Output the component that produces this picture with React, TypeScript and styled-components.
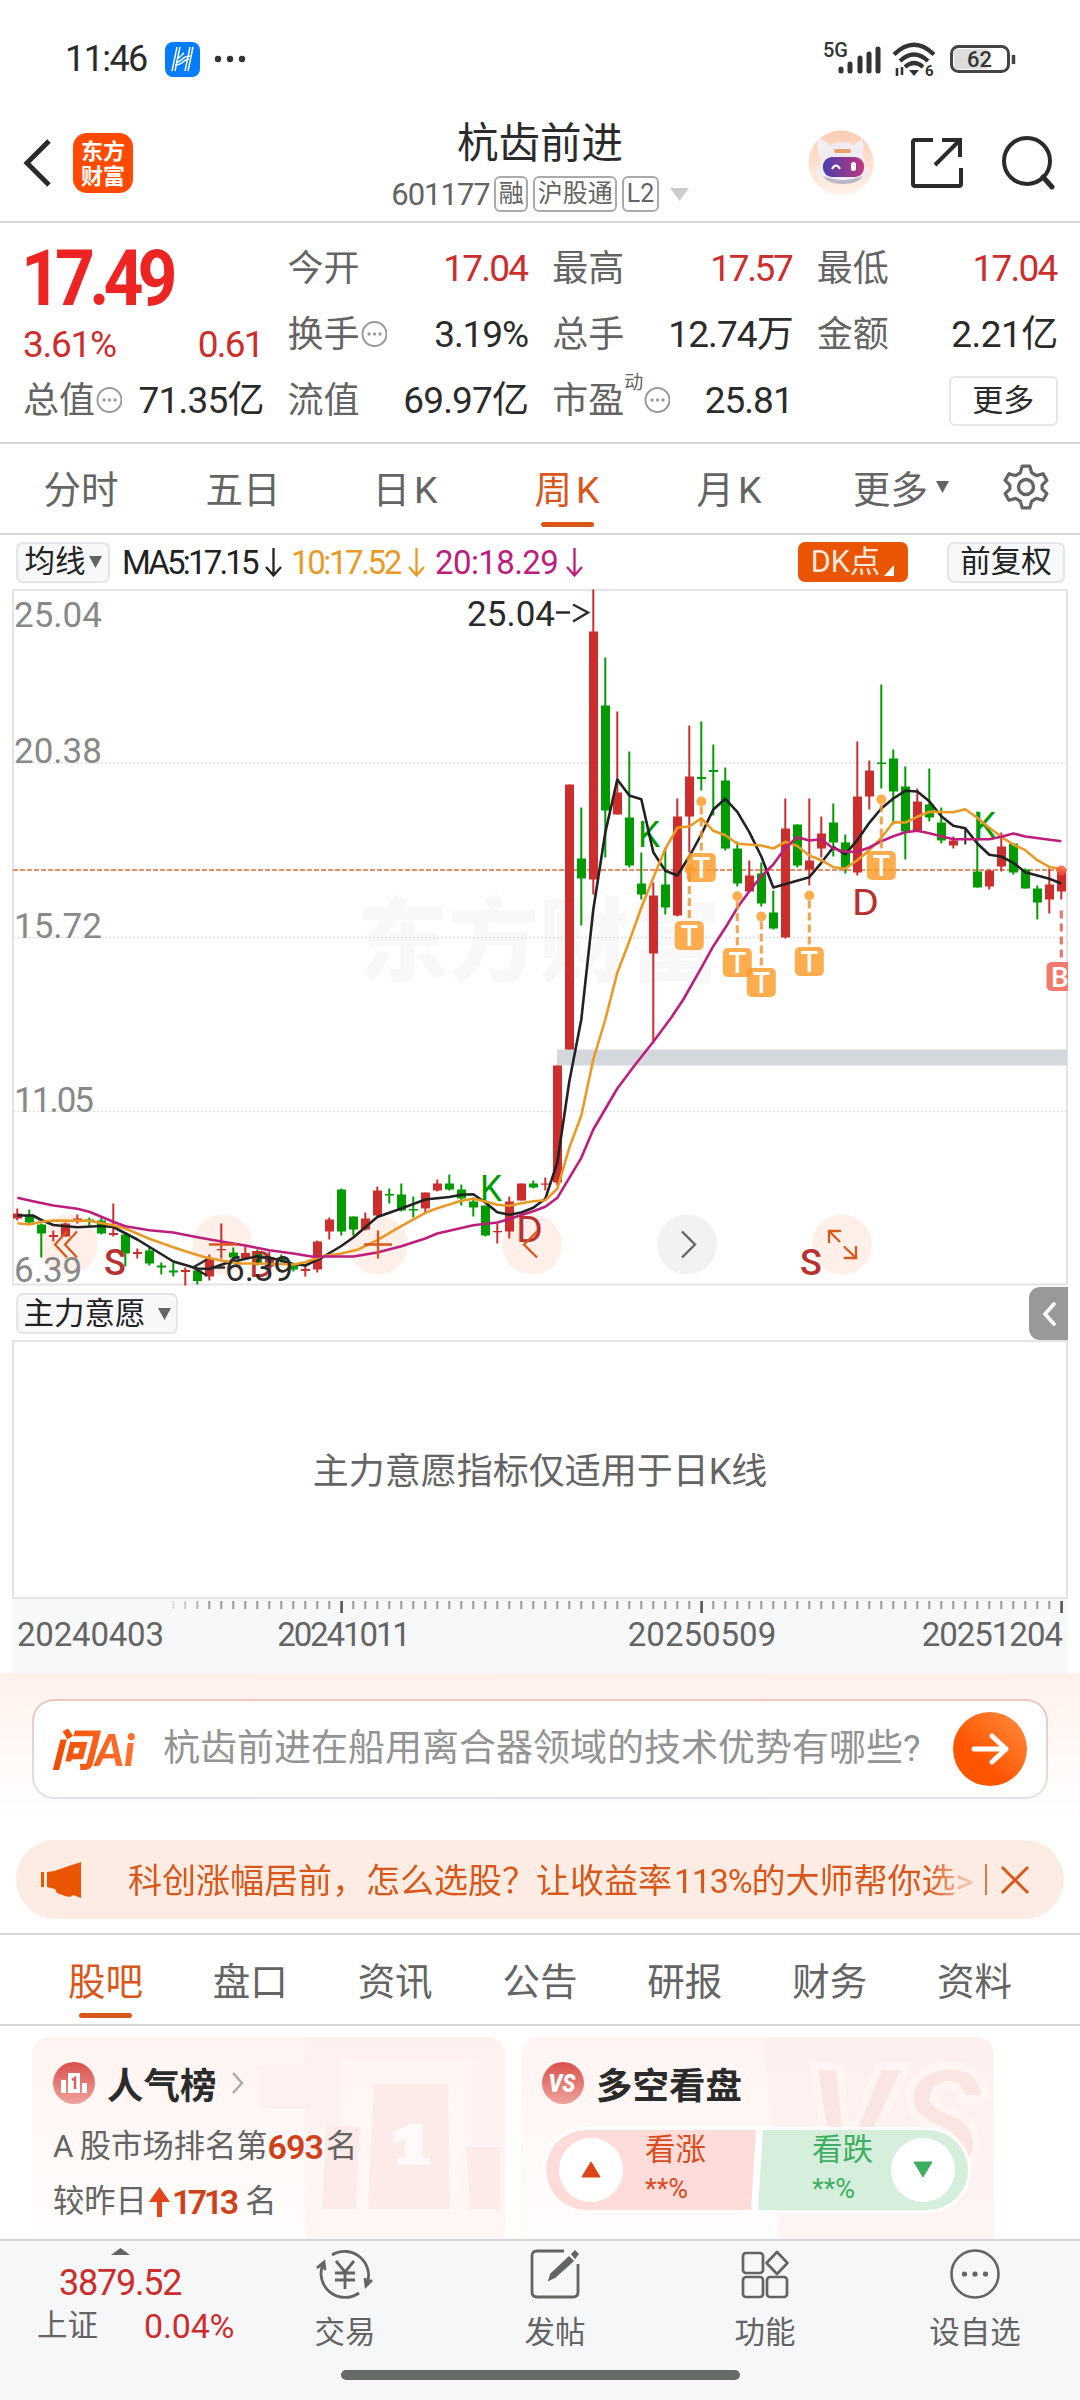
import React from "react";
import styled, { createGlobalStyle } from "styled-components";

const Global = createGlobalStyle`
  * { box-sizing: border-box; }
  body { margin: 0; background: #fff; }
`;

const RED = "#cc2e2e";
const GREEN = "#029c02";
const ORANGE = "#d9571a";
const GREY = "#646464";
const INK = "#2b2b2b";
const LINE = "#d6d6d6";
const SANS = `Roboto, "Noto Sans CJK SC", sans-serif`;

const Page = styled.div`
  width: 1080px;
  height: 2400px;
  overflow: hidden;
  display: flex;
  flex-direction: column;
  background: #fff;
  color: ${INK};
  font-family: ${SANS};
  white-space: nowrap;
`;

const Txt = styled.span<{ $s?: number; $c?: string; $ls?: number; $w?: number }>`
  font-size: ${(p) => p.$s ?? 37}px;
  color: ${(p) => p.$c ?? "inherit"};
  letter-spacing: ${(p) => p.$ls ?? 0}px;
  margin-right: ${(p) => -(p.$ls ?? 0) - 1.5}px;
  font-weight: ${(p) => p.$w ?? 400};
  line-height: 1.2;
`;

/* ---------- status bar ---------- */
const StatusBar = styled.div`
  height: 105px;
  padding: 14px 64px 0 65px;
  display: flex;
  align-items: center;
  justify-content: space-between;
`;
const StatusSide = styled.div`
  display: flex;
  align-items: center;
`;
const AppBadge = styled.div`
  width: 35px;
  height: 35px;
  margin: 0 14px 0 18px;
  border-radius: 8px;
  background: #057dfb;
  display: grid;
  place-items: center;
`;

/* ---------- header ---------- */
const Header = styled.header`
  height: 118px;
  border-bottom: 2px solid ${LINE};
  display: grid;
  grid-template-columns: 1fr auto 1fr;
  align-items: center;
`;
const HeaderLeft = styled.div`
  display: flex;
  align-items: center;
  gap: 21px;
  padding-left: 23px;
`;
const HeaderRight = styled.div`
  display: flex;
  align-items: center;
  justify-content: flex-end;
  padding-right: 25px;
`;
const Logo = styled.div`
  width: 60px;
  height: 60px;
  border-radius: 14px;
  background: #ff4a00;
  color: #fff;
  font: 700 22px/25px "Noto Sans CJK SC", sans-serif;
  text-align: center;
  padding-top: 4px;
  white-space: normal;
`;
const TitleBox = styled.div`
  display: flex;
  flex-direction: column;
  align-items: center;
`;
const Title = styled.div`
  font-size: 41.5px;
  line-height: 50px;
  margin-top: 13px;
`;
const CodeRow = styled.div`
  display: flex;
  align-items: center;
  gap: 5px;
  height: 50px;
  color: ${GREY};
`;
const Tag = styled.span`
  height: 36px;
  padding: 0 2.5px;
  border: 2px solid #aaa;
  border-radius: 6px;
  font-size: 25px;
  line-height: 32px;
`;

/* ---------- quote ---------- */
const Quote = styled.section`
  height: 221px;
  padding: 13px 23px 0;
  border-bottom: 2px solid ${LINE};
  display: grid;
  grid-template-columns: repeat(4, 240px);
  grid-template-rows: 198px;
  column-gap: 24.6px;
`;
const QuoteCol = styled.div`
  display: flex;
  flex-direction: column;
`;
const Cell = styled.div<{ $h?: number }>`
  height: ${(p) => p.$h ?? 66}px;
  display: flex;
  align-items: center;
  justify-content: space-between;
`;
const Label = styled.span`
  display: flex;
  align-items: center;
  font-size: 36px;
  line-height: 44px;
  color: ${GREY};
`;
const Sup = styled.sup`
  align-self: flex-start;
  margin-top: -9px;
  font-size: 19px;
  line-height: 26px;
`;
const Price = styled.div`
  height: 87px;
  margin-left: -2px;
  display: flex;
  align-items: center;
  color: #ec2424;
  font-size: 77px;
  font-weight: 700;
  letter-spacing: -6.5px;
  transform: scaleX(0.905);
  transform-origin: 0 50%;
`;
const MoreButton = styled.button`
  width: 109px;
  height: 50px;
  margin-left: auto;
  margin-right: -1px;
  padding: 0;
  border: 2px solid #e6e6e6;
  border-radius: 6px;
  background: #fff;
  color: ${INK};
  font: 31px/44px ${SANS};
`;

/* ---------- tabs ---------- */
const PeriodTabs = styled.nav`
  height: 91px;
  border-bottom: 2px solid ${LINE};
  display: grid;
  grid-template-columns: repeat(6, 162px) 1fr;
`;
const Tab = styled.div<{ $on?: boolean; $pad?: number }>`
  display: flex;
  align-items: center;
  justify-content: center;
  position: relative;
  gap: 8px;
  padding: 0 0 3px ${(p) => p.$pad ?? 0}px;
  font-size: 37.5px;
  color: ${(p) => (p.$on ? ORANGE : GREY)};
  &::after {
    content: "";
    display: ${(p) => (p.$on ? "block" : "none")};
    position: absolute;
    bottom: 6px;
    left: calc(50% - 26.5px);
    width: 53px;
    height: 5px;
    border-radius: 3px;
    background: ${ORANGE};
  }
`;

/* ---------- indicator toolbar ---------- */
const MaBar = styled.div`
  height: 55px;
  padding: 1px 15px 0 16px;
  display: flex;
  align-items: center;
`;
const Chip = styled.button<{ $w: number; $hot?: boolean }>`
  width: ${(p) => p.$w}px;
  height: ${(p) => (p.$hot ? 40 : 41)}px;
  flex: none;
  padding: 0;
  display: flex;
  align-items: center;
  justify-content: center;
  gap: 3px;
  border: ${(p) => (p.$hot ? "0" : "2px solid #e3e5e8")};
  border-radius: 7px;
  background: ${(p) => (p.$hot ? "#ea5504" : "#f7f8fa")};
  color: ${(p) => (p.$hot ? "#ffe9dc" : "#222")};
  font: 30.5px/36px ${SANS};
`;
const MaItem = styled.span<{ $c: string; $w: number; $ls: number }>`
  width: ${(p) => p.$w}px;
  display: flex;
  align-items: center;
  gap: 8px;
  color: ${(p) => p.$c};
  font-size: 33px;
  letter-spacing: ${(p) => p.$ls}px;
`;
const Spacer = styled.div<{ $w?: number }>`
  flex: ${(p) => (p.$w ? `0 0 ${p.$w}px` : "1")};
`;

/* ---------- charts ---------- */
const ChartSvg = styled.svg`
  display: block;
  flex: none;
  font-family: ${SANS};
`;
const SubBar = styled.div`
  height: 54px;
  padding: 1px 12px 0 16px;
  display: flex;
  align-items: center;
  justify-content: space-between;
`;
const Collapse = styled.div`
  width: 39px;
  height: 53px;
  border-radius: 11px 0 0 11px;
  background: #999;
  display: grid;
  place-items: center;
`;
const SubPanel = styled.div`
  height: 259px;
  margin: 0 12px;
  padding-bottom: 4px;
  border: 2px solid #e4e4e4;
  display: flex;
  align-items: center;
  justify-content: center;
  font-size: 36px;
  color: ${GREY};
`;
const Axis = styled.div`
  height: 74px;
  margin: 0 12px;
  padding-top: 1px;
  background: #f7f8fa;
`;
const Dates = styled.div`
  display: grid;
  grid-template-columns: 238px 176px 180px 182px 1fr;
  padding: 0 6px 0 5px;
  font-size: 33px;
  line-height: 42px;
  color: ${GREY};
`;
const DateLabel = styled.span<{ $align: string; $ls: number; $col: number }>`
  grid-column: ${(p) => p.$col};
  text-align: ${(p) => p.$align};
  letter-spacing: ${(p) => p.$ls}px;
`;

/* ---------- AI box ---------- */
const AiSection = styled.section`
  height: 150px;
  padding: 26px 32px 0;
  background: linear-gradient(#fff1ec, #fff);
`;
const AiBox = styled.div`
  height: 100px;
  padding: 0 19px 0 17px;
  border: 2px solid transparent;
  border-radius: 22px;
  background: linear-gradient(#fff, #fff) padding-box, linear-gradient(#edc6bd, #dfe3ea) border-box;
  display: flex;
  align-items: center;
`;
const AiLogo = styled.span`
  width: 96px;
  margin-right: 16px;
  font: italic 900 44px/52px Lato, "Noto Sans CJK SC", sans-serif;
  letter-spacing: 0;
  background: linear-gradient(90deg, #f04a00, #ff7a3c);
  background-clip: text;
  -webkit-background-clip: text;
  color: transparent;
`;
const AiGo = styled.div`
  width: 74px;
  height: 74px;
  margin-left: auto;
  border-radius: 50%;
  background: linear-gradient(45deg, #ff5400 35%, #ff8f42);
  display: grid;
  place-items: center;
`;

/* ---------- banner ---------- */
const Banner = styled.div`
  height: 79px;
  flex: none;
  margin: 17px 16px 14px;
  padding: 0 34px 0 24px;
  border-radius: 40px;
  background: #fcece3;
  color: ${ORANGE};
  display: flex;
  align-items: center;
`;
const BannerText = styled.div`
  width: 846px;
  margin-left: 46px;
  padding-bottom: 2px;
  font-size: 34px;
  mask-image: linear-gradient(90deg, #000 800px, rgba(0, 0, 0, 0.3) 835px);
`;
const Hundred = styled.span`
  margin-left: 2px;
  letter-spacing: -1.2px;
`;
const Divider = styled.i`
  width: 2px;
  height: 31px;
  margin: 0 13px 0 auto;
  background: #dd7a4a;
`;

const InfoTabs = styled.nav`
  height: 93px;
  flex: none;
  padding: 0 33px;
  border-top: 2px solid ${LINE};
  border-bottom: 2px solid ${LINE};
  display: grid;
  grid-template-columns: repeat(7, 1fr);
`;

/* ---------- cards ---------- */
const Cards = styled.section`
  height: 213px;
  flex: none;
  padding: 11px 32px 0;
  display: flex;
  gap: 16px;
`;
const Card = styled.div`
  width: 473px;
  border-radius: 18px 18px 0 0;
  background: linear-gradient(#fff4f1, #fffdfc);
  position: relative;
  overflow: hidden;
`;
const CardArt = styled.svg`
  position: absolute;
  right: 0;
  top: 0;
`;
const CardBody = styled.div`
  position: relative;
  padding: 0 21px;
`;
const CardHead = styled.div`
  height: 92px;
  display: flex;
  align-items: center;
  gap: 12px;
  font-size: 36.5px;
  font-weight: 700;
`;
const CardLine = styled.div`
  height: 55px;
  display: flex;
  align-items: center;
  font-size: 31.3px;
  line-height: 40px;
  position: relative;
  top: -10px;
  color: ${GREY};
`;
const Hot = styled.b<{ $ls?: number }>`
  color: #d04018;
  font-size: 34px;
  font-weight: 600;
  letter-spacing: ${(p) => p.$ls ?? -1}px;
`;
const Duel = styled.div`
  width: 428px;
  height: 86px;
  margin: -2px 0 0 1px;
  padding: 3px;
  border-radius: 43px;
  background: #fff;
  display: flex;
  gap: 2px;
`;
const Side = styled.div<{ $bull?: boolean }>`
  flex: 1;
  display: flex;
  align-items: center;
  justify-content: ${(p) => (p.$bull ? "flex-start" : "flex-end")};
  gap: ${(p) => (p.$bull ? 22 : 18)}px;
  padding: 0 13px;
  color: ${(p) => (p.$bull ? "#d84b1f" : "#3fae62")};
  background: ${(p) => (p.$bull ? "#fddcd9" : "#d5efdc")};
  border-radius: ${(p) => (p.$bull ? "40px 0 0 40px" : "0 40px 40px 0")};
  clip-path: ${(p) =>
    p.$bull ? "polygon(0 0, 100% 0, calc(100% - 5px) 100%, 0 100%)" : "polygon(5px 0, 100% 0, 100% 100%, 0 100%)"};
`;
const SideText = styled.div`
  display: flex;
  flex-direction: column;
  gap: 5px;
  font-size: 30.5px;
  line-height: 36px;
  padding-bottom: 2px;
`;
const Disc = styled.div`
  width: 64px;
  height: 64px;
  border-radius: 50%;
  background: #fff;
  display: grid;
  place-items: center;
`;

/* ---------- bottom bar ---------- */
const Bottom = styled.footer`
  height: 161px;
  flex: none;
  border-top: 2px solid #d3d5d6;
  background: #f6f7f9;
`;
const BottomRow = styled.div`
  height: 129px;
  display: grid;
  grid-template-columns: 240px repeat(4, 210px);
`;
const IndexCell = styled.div`
  display: flex;
  flex-direction: column;
  align-items: center;
  gap: 7px;
  color: ${RED};
  padding-top: 7px;
`;
const IndexRow = styled.div`
  width: 100%;
  padding: 0 7px 0 37px;
  margin-top: -7px;
  display: flex;
  align-items: center;
  justify-content: space-between;
  height: 42px;
`;
const Action = styled.div`
  display: flex;
  flex-direction: column;
  align-items: center;
  color: ${GREY};
  font-size: 30.5px;
  line-height: 40px;
  padding-top: 5px;
  gap: 11px;
`;
const HomeBar = styled.div`
  width: 399px;
  height: 10px;
  margin: 0 auto;
  border-radius: 5px;
  background: #666a68;
`;

/* ---------- small drawings ---------- */
const Dots = () => (
  <svg width="27" height="27" viewBox="0 0 27 27" fill="none" stroke="#9a9a9a" strokeWidth="2">
    <circle cx="14.5" cy="13" r="12" />
    <g fill="#9a9a9a" stroke="none">
      <circle cx="9" cy="13" r="1.7" />
      <circle cx="14.5" cy="13" r="1.7" />
      <circle cx="20" cy="13" r="1.7" />
    </g>
  </svg>
);
const Caret = ({ w = 12, h = 11, c = GREY, up = false }) => (
  <svg width={w} height={h} viewBox="0 0 10 10" preserveAspectRatio="none">
    <path d={up ? "M0 10H10L5 0Z" : "M0 0H10L5 10Z"} fill={c} />
  </svg>
);
const DownArrow = () => (
  <svg width="17" height="29" viewBox="0 0 17 29" fill="none" stroke="currentColor" strokeWidth="2.3">
    <path d="M8.5 0V27M1 19L8.5 27.5L16 19" />
  </svg>
);
const ShareIcon = styled.svg`
  margin: 0 38px 0 37px;
`;
const MoreArrow = styled.svg`
  margin-left: 2px;
`;
const RiseArrow = styled.svg`
  margin: 0 2px 0 2px;
`;

/* ---------- candle data: colour, high, body top, body bottom, low ---------- */
type Candle = [string, number, number, number, number];
const candles: Candle[] = [
  ["r", 1209, 1214, 1219, 1221], ["g", 1210, 1216, 1223, 1224], ["g", 1224, 1225, 1234, 1258], ["r", 1231, 1235.5, 1237.5, 1242],
  ["r", 1223, 1224, 1237, 1237], ["r", 1215, 1219, 1221, 1224], ["g", 1218, 1220, 1222, 1227], ["g", 1218, 1221, 1234, 1235],
  ["r", 1204, 1233.5, 1235.5, 1237], ["g", 1233, 1235, 1254, 1267], ["r", 1249, 1252.5, 1254.5, 1259], ["g", 1248, 1251, 1264, 1266],
  ["g", 1263, 1266, 1268, 1275], ["g", 1263, 1271, 1273, 1277], ["r", 1268, 1270.5, 1272.5, 1286], ["g", 1270, 1271, 1281.5, 1285],
  ["r", 1255, 1259, 1277, 1281], ["r", 1224, 1249.5, 1250.8, 1259], ["g", 1248, 1253, 1258, 1261], ["r", 1247, 1253.5, 1259, 1259],
  ["g", 1250, 1252, 1265, 1266], ["r", 1252, 1258, 1267, 1267], ["g", 1255, 1258, 1261, 1263], ["g", 1264, 1266, 1270, 1272],
  ["r", 1266, 1269.5, 1271.5, 1277], ["r", 1241, 1242, 1270, 1273], ["r", 1218, 1220, 1232, 1240], ["g", 1189, 1190, 1232, 1236],
  ["g", 1217, 1217, 1230, 1236], ["r", 1213, 1219, 1230, 1231], ["r", 1187, 1191, 1216, 1217], ["g", 1189, 1194.5, 1196, 1204],
  ["g", 1184, 1195, 1211, 1212], ["g", 1197, 1209.5, 1211, 1218], ["r", 1193, 1193, 1209, 1213], ["r", 1180, 1184, 1191, 1192],
  ["g", 1175, 1184, 1190, 1191], ["g", 1185, 1190, 1199, 1206], ["g", 1198, 1202, 1208, 1217], ["g", 1206, 1206, 1236, 1237],
  ["r", 1224, 1231.5, 1232.8, 1244], ["r", 1197, 1202, 1232, 1239], ["r", 1184, 1184, 1201, 1201], ["g", 1181, 1184, 1188, 1189],
  ["r", 1178, 1184, 1185.2, 1191], ["r", 1066, 1066, 1183, 1186], ["r", 785, 785, 1050, 1050], ["g", 808, 859, 879, 926],
  ["r", 590, 632, 880, 895], ["g", 658, 706, 811, 858], ["r", 712, 793, 815, 815], ["g", 752, 818, 866, 868],
  ["g", 853, 884, 895, 900], ["r", 883, 896, 954, 1044], ["g", 848, 885, 908, 915], ["r", 799, 817, 916, 917],
  ["r", 726, 777, 817, 853], ["g", 722, 777.5, 779.5, 791], ["g", 745, 770.5, 772.5, 816], ["g", 768, 781, 849, 851],
  ["g", 842, 849, 884, 887], ["r", 861, 876, 892, 892], ["g", 863, 874, 904, 907], ["g", 891, 913, 929, 930],
  ["r", 799, 829, 938, 939], ["g", 825, 825, 866, 868], ["r", 799, 861, 870, 886], ["r", 817, 834, 849, 858],
  ["g", 804, 823, 843, 857], ["g", 835, 843, 868, 874], ["r", 742, 797, 873, 876], ["r", 761, 771, 797, 810],
  ["g", 685, 763, 764.5, 789], ["g", 750, 759, 792, 825], ["g", 767, 787, 832, 860], ["r", 789, 802, 831, 832],
  ["g", 769, 805, 818, 822], ["g", 808, 823, 841, 844], ["r", 837, 841, 846, 849], ["k", 828, 838.5, 840.5, 845],
  ["g", 812, 872, 888, 888], ["r", 870, 871, 887, 890], ["r", 833, 847, 867, 872], ["g", 844, 844, 873, 875],
  ["g", 869, 870, 889, 889], ["g", 886, 889, 903, 920], ["r", 869, 885, 900, 914], ["r", 870, 872, 892, 900],
];
const cx = (i: number) => 17.3 + i * 12;
const tone: Record<string, string> = { r: RED, g: GREEN, k: INK };

/* moving averages as candle index, y */
const ma5 = [
  0, 1216, 1.3, 1216, 2, 1220.5, 3, 1225.5, 5, 1227.7, 7, 1226.5, 8, 1227.5, 10, 1240, 13, 1262, 15, 1269, 16, 1269.5, 17.3, 1264, 20, 1256.7,
  21, 1258, 23, 1264.5, 24, 1266, 25.4, 1258, 27, 1246.5, 28, 1238, 30, 1217.5, 32, 1209, 34, 1200, 36, 1197.5, 37, 1195.3, 38, 1194.7, 39, 1203,
  40, 1212.7, 41, 1215.3, 42, 1213, 43, 1208.3, 44, 1199.3, 45, 1163, 46, 1082, 47, 1020, 48, 910, 49, 833, 50, 780, 51, 796, 52, 799.7,
  53, 852.7, 54, 871.3, 55, 876, 56, 857, 57, 835, 58, 810, 59, 799.3, 60, 812.3, 61, 832.7, 62, 857, 63, 888, 66, 877.7, 67, 863.3, 68, 847.7,
  69, 854.7, 70, 840.7, 71, 823.3, 72, 809, 73, 799, 74, 791.3, 75, 792, 76, 801.7, 77, 816.7, 78, 826.3, 79, 828.7, 80, 844, 81, 855.3,
  82, 857, 83, 863.3, 84, 872.7, 85, 876, 86, 879.3, 87, 884,
];
const ma10 = [
  0, 1223.7, 1, 1225, 2, 1222.3, 3, 1221, 6, 1221.3, 8, 1225.7, 9, 1229, 11, 1239.3, 13, 1247.7, 14, 1251.7, 15.5, 1257.3, 17, 1261, 18.5, 1264,
  20, 1264, 23, 1265, 24, 1262.7, 25.4, 1256.7, 27, 1254, 28.4, 1250, 30, 1240.7, 32, 1226.7, 34, 1213.3, 35, 1208.7, 36, 1205, 37, 1201.3,
  38, 1199.3, 39, 1202, 40, 1205.3, 41, 1206.3, 42, 1203.7, 43, 1201.7, 44, 1200.7, 45, 1189.3, 46, 1148.3, 47, 1116, 48, 1060, 49, 1020,
  50, 973.3, 51, 941.7, 52, 908.3, 53, 878.3, 54, 849.3, 55, 828.3, 56, 827, 57, 818.7, 58, 831.3, 59, 835.7, 60, 844.3, 62, 846, 63, 849,
  64, 842.3, 65, 846.5, 66, 856, 67, 860.7, 68, 867.7, 69, 869, 70, 860.7, 71, 850.7, 72, 838.3, 73, 822.7, 74, 823, 75, 817.3, 76, 812.3,
  78, 812.7, 79, 809.7, 80, 818.3, 81, 828.3, 82, 837.3, 83, 845, 84, 850.7, 85, 860.7, 86, 867.3, 87, 870,
];
const ma20 = [
  0, 1198.3, 1.3, 1201.7, 3, 1206, 5, 1209.3, 6, 1212.3, 8, 1222.3, 9, 1226.7, 11, 1230.7, 13, 1233, 15, 1237.7, 17, 1242, 19, 1246, 21, 1250.7,
  23, 1254, 24.5, 1257, 28, 1257, 30, 1253, 32, 1246.7, 34, 1239, 35, 1234, 38, 1225.7, 40, 1223, 41, 1219.5, 43, 1211.7, 44, 1207.3, 45, 1198.3,
  46, 1178.3, 47, 1158.3, 48, 1130, 50, 1089, 51.5, 1065, 53, 1042.3, 54.5, 1018, 55.5, 1000, 57, 968.3, 58, 946.7, 59, 928.3, 60, 908.3, 61, 891.7,
  62, 876.7, 63, 865, 64, 848.3, 65, 837.7, 66, 841, 67, 839.7, 68, 849, 69, 852.3, 70, 852.3, 71, 848, 72, 841.7, 73, 836.7, 74, 832.7,
  75, 831.3, 76, 833.7, 78, 839.7, 81, 839.7, 82, 837.3, 83, 834, 84, 837, 87, 841.7,
];
const toPoints = (a: number[]) => {
  let s = "";
  for (let i = 0; i < a.length; i += 2) s += `${cx(a[i])},${a[i + 1]} `;
  return s;
};
const tMarks = [
  [57, 802, 868], [56, 869.5, 936], [60, 896.7, 963], [62, 917, 983], [66, 896, 962], [72, 800, 866],
];
const buttons = [68, 222.5, 377.7, 532, 687, 842];

const Kline = () => (
  <ChartSvg width="1080" height="697" viewBox="0 589.5 1080 697">
    <g fontFamily="Noto Sans CJK SC" fontWeight="900" fontSize="91" fill="#f8f8f8">
      <text x="357" y="974">东方财富</text>
    </g>
    <g stroke="#dedede" strokeWidth="1.4" strokeDasharray="2 2">
      <path d="M13 763.5H1067M13 938H1067M13 1112H1067" />
    </g>
    <path d="M13 590.5H1067V1285H13Z" fill="none" stroke="#e4e4e4" strokeWidth="2" />
    {buttons.map((x, i) => (
      <circle key={x} cx={x} cy="1245" r="30" fill={i === 4 ? "#f2f2f2" : "#fef0e9"} />
    ))}
    <rect x="557" y="1050" width="510" height="16" fill="#d4d7dc" />
    <g fill="#888" fontSize="35">
      <text x="14" y="627.5">25.04</text>
      <text x="14" y="763.5">20.38</text>
      <text x="14" y="938">15.72</text>
      <text x="14" y="1112" textLength="80">11.05</text>
      <text x="14" y="1282">6.39</text>
    </g>
    <path d="M13 870.5H1067" stroke="#dd6b35" strokeWidth="1.6" strokeDasharray="5 2" />
    {candles.map(([c, hi, top, bot, lo], i) => (
      <g key={i} fill={tone[c]}>
        <rect x={cx(i) - 1} y={hi} width="2" height={lo - hi} />
        <rect x={cx(i) - 4.3} y={top} width="9" height={bot - top} />
      </g>
    ))}
    <g fontSize="36" fill={GREEN}>
      <text x="480" y="1201" textLength="22" lengthAdjust="spacingAndGlyphs">K</text>
      <text x="638" y="847" textLength="22" lengthAdjust="spacingAndGlyphs">K</text>
      <text x="974" y="838" textLength="22" lengthAdjust="spacingAndGlyphs">K</text>
    </g>
    <g fontSize="36" fill="#b83030">
      <text x="852" y="915" textLength="27" lengthAdjust="spacingAndGlyphs">D</text>
      <text x="516" y="1242" textLength="27" lengthAdjust="spacingAndGlyphs">D</text>
      <text x="249" y="1277" textLength="25" lengthAdjust="spacingAndGlyphs">D</text>
      <text x="104" y="1275" fontWeight="500">S</text>
      <text x="800" y="1275" fontWeight="500">S</text>
    </g>
    <g fill="none" strokeWidth="2.6" strokeLinejoin="round">
      <polyline points={toPoints(ma5)} stroke="#222" />
      <polyline points={toPoints(ma10)} stroke="#ea9a24" />
      <polyline points={toPoints(ma20)} stroke="#bd1d7b" />
    </g>
    <g fontSize="35" fill={INK}>
      <text x="467" y="626" textLength="88">25.04</text>
      <text x="225" y="1281">6.39</text>
    </g>
    <g fill="none" stroke={INK} strokeWidth="2.4">
      <path d="M556 613H570M573 605L588 613L573 622" />
      <path d="M207 1260L193 1268L207 1276M211 1268H225" />
    </g>
    {tMarks.map(([i, dot, box]) => (
      <g key={i} opacity="0.82">
        <circle cx={cx(i)} cy={dot} r="5" fill="#fd9b28" />
        <path d={`M${cx(i)} ${dot + 5}V${box - 14}`} stroke="#ee9530" strokeWidth="3.2" strokeDasharray="8 4" />
        <rect x={cx(i) - 14.5} y={box - 14.5} width="29" height="29" rx="5" fill="#fd9b28" />
        <text x={cx(i)} y={box + 10} textAnchor="middle" fill="#fff" fontSize="29" fontWeight="500">T</text>
      </g>
    ))}
    <clipPath id="plot"><rect x="13" y="590" width="1055" height="697" /></clipPath>
    <g clipPath="url(#plot)">
      <circle cx="1061.3" cy="871" r="5" fill="#f4553e" opacity="0.8" />
      <path d="M1061.3 911V962" stroke="#e2796c" strokeWidth="3.2" strokeDasharray="8 5" />
      <rect x="1046.5" y="962.5" width="30" height="29" rx="5" fill="#f37b6c" />
      <text x="1051" y="987" fill="#fff" fontSize="28" fontWeight="500">B</text>
    </g>
    <g fill="none" stroke={ORANGE} strokeWidth="2.3">
      <path d="M67 1232L55 1245L67 1258M77 1232L65 1245L77 1258" />
      <path d="M209 1245H237M364 1245H392M378 1231V1259" />
      <path d="M537 1232L524 1245L537 1258" />
      <path d="M841 1231.5H829V1243.5M829 1231.5L840 1242.5M844 1258.5H856V1246.5M856 1258.5L844 1247" />
      <path d="M682 1232L695 1245L682 1258" stroke={GREY} />
    </g>
  </ChartSvg>
);

const ticks = Array.from({ length: 75 }, (_, k) => k + 13);

export default function App() {
  return (
    <Page>
      <Global />
      <StatusBar>
        <StatusSide>
          <Txt $s={36} $w={450} $ls={-1.6}>11:46</Txt>
          <AppBadge>
            <svg width="25" height="26" viewBox="0 0 25 26" fill="none" stroke="#fff" strokeWidth="1.5">
              <path d="M7 1L2 25M10 1L5 25M20 1L15 25M23 1L18 25M6 16C12 17 11 10 20 10M5 19C14 19 13 13 19 13M7 12C10 13 12 8 14 7" />
            </svg>
          </AppBadge>
          <svg width="32" height="8" viewBox="0 0 32 8" fill="#333">
            <circle cx="4" cy="4" r="3.2" /><circle cx="16" cy="4" r="3.2" /><circle cx="28" cy="4" r="3.2" />
          </svg>
        </StatusSide>
        <svg width="195" height="36" viewBox="821 41 195 36" fontFamily="Roboto">
          <text x="823" y="57" fontSize="20" fontWeight="500" fill="#333">5G</text>
          <g stroke="#333" strokeWidth="5" strokeLinecap="round">
            <path d="M841 69V71M850 64V71M860 58V71M869 54V71M878 49V71" />
          </g>
          <g fill="none" stroke="#333" strokeWidth="4.2">
            <path d="M894 54.5Q914 35 934 54.5" />
            <path d="M900 61Q914 48 928 61" />
            <path d="M905 67Q914 59 923 67" />
          </g>
          <path d="M909 70H919L914 76Z" fill="#333" />
          <path d="M897 68V76M902 67V75" stroke="#333" strokeWidth="2.6" />
          <text x="925" y="76" fontSize="15" fontWeight="700" fill="#333">6</text>
          <rect x="951.5" y="46.5" width="57" height="25" rx="7" fill="#fff" stroke="#444" strokeWidth="3" />
          <path d="M957 49H987V69H957Q954 69 954 66V52Q954 49 957 49Z" fill="#ddd" />
          <path d="M1013.5 55V64" stroke="#444" strokeWidth="3.5" />
          <text x="979.5" y="67" fontSize="22" fontWeight="500" fill="#333" textAnchor="middle">62</text>
        </svg>
      </StatusBar>

      <Header>
        <HeaderLeft>
          <svg width="29" height="48" viewBox="0 0 29 48" fill="none" stroke={INK} strokeWidth="5">
            <path d="M26 2L4 24L26 46" />
          </svg>
          <Logo>东方<br />财富</Logo>
        </HeaderLeft>
        <TitleBox>
          <Title>杭齿前进</Title>
          <CodeRow>
            <Txt $s={31} $ls={-1}>601177</Txt>
            <Tag>融</Tag><Tag>沪股通</Tag><Tag>L2</Tag>
            <Spacer $w={1} />
            <Caret w={19} h={13} c="#ccc" />
          </CodeRow>
        </TitleBox>
        <HeaderRight>
          <svg width="66" height="66" viewBox="0 0 66 66">
            <defs>
              <linearGradient id="face" x1="0" x2="1"><stop stopColor="#4a3eb0" /><stop offset="1" stopColor="#c0397c" /></linearGradient>
              <linearGradient id="halo" x1="0" y1="0" x2="0" y2="1"><stop stopColor="#fdcdb2" /><stop offset="1" stopColor="#fff3ec" /></linearGradient>
            </defs>
            <circle cx="33" cy="33" r="32.5" fill="url(#halo)" />
            <path d="M10 8Q17 9 23 17L12 28Q8 18 10 8ZM54 10Q48 11 44 17L54 26Q57 18 54 10Z" fill="#f2eef2" />
            <path d="M12 38Q12 13 34 12Q56 13 57 36L60 38V46L56 48Q50 54 34 53Q18 53 12 46L8 44V36Z" fill="#f0ecf2" />
            <path d="M15 46Q34 54 55 46Q50 54 35 54Q20 54 15 46Z" fill="#bdb6c6" />
            <rect x="15" y="27" width="41" height="20" rx="9" fill="url(#face)" />
            <rect x="26" y="19" width="17" height="4" rx="2" fill="#e9a06a" />
            <path d="M24 39Q28 32 32 39" fill="none" stroke="#fff" strokeWidth="2.2" />
            <rect x="43" y="32" width="5" height="9" rx="2.5" fill="#fff" />
          </svg>
          <ShareIcon width="52" height="52" viewBox="0 0 52 52" fill="none" stroke={INK} strokeWidth="4">
            <path d="M22 3H4Q2 3 2 5V47Q2 49 4 49H48Q50 49 50 47V31M31 3H49V20M49 3L24 28" />
          </ShareIcon>
          <svg width="54" height="54" viewBox="0 0 54 54" fill="none" stroke={INK} strokeWidth="4">
            <circle cx="26" cy="25" r="23" /><path d="M42 41L51 51" strokeWidth="5" strokeLinecap="round" />
          </svg>
        </HeaderRight>
      </Header>

      <Quote>
        <QuoteCol>
          <Price>17.49</Price>
          <Cell $h={45}><Txt $c={RED} $ls={-1.3}>3.61%</Txt><Txt $c={RED} $ls={-1.8}>0.61</Txt></Cell>
          <Cell><Label>总值<Dots /></Label><Txt $ls={-0.8}>71.35亿</Txt></Cell>
        </QuoteCol>
        <QuoteCol>
          <Cell><Label>今开</Label><Txt $c={RED} $ls={-1.8}>17.04</Txt></Cell>
          <Cell><Label>换手<Dots /></Label><Txt $ls={-1.1}>3.19%</Txt></Cell>
          <Cell><Label>流值</Label><Txt $ls={-0.8}>69.97亿</Txt></Cell>
        </QuoteCol>
        <QuoteCol>
          <Cell><Label>最高</Label><Txt $c={RED} $ls={-2.4}>17.57</Txt></Cell>
          <Cell><Label>总手</Label><Txt $ls={-0.9}>12.74万</Txt></Cell>
          <Cell><Label>市盈<Sup>动</Sup><Dots /></Label><Txt $ls={-1}>25.81</Txt></Cell>
        </QuoteCol>
        <QuoteCol>
          <Cell><Label>最低</Label><Txt $c={RED} $ls={-1.8}>17.04</Txt></Cell>
          <Cell><Label>金额</Label><Txt $ls={-0.5}>2.21亿</Txt></Cell>
          <Cell><MoreButton>更多</MoreButton></Cell>
        </QuoteCol>
      </Quote>

      <PeriodTabs>
        <Tab>分时</Tab>
        <Tab>五日</Tab>
        <Tab>日&#8202;K</Tab>
        <Tab $on>周&#8202;K</Tab>
        <Tab>月&#8202;K</Tab>
        <Tab $pad={20}>更多<Caret w={13} h={12} /></Tab>
        <Tab>
          <svg width="46" height="48" viewBox="0 0 46 48" fill="none" stroke={GREY} strokeWidth="3.4" strokeLinejoin="round">
            <path d="M19 2H27L29 9L34 12L41 10L45 17L40 22V26L45 31L41 38L34 36L29 39L27 46H19L17 39L12 36L5 38L1 31L6 26V22L1 17L5 10L12 12L17 9Z" transform="translate(1.2 1.2) scale(.948 .95)" />
            <circle cx="23" cy="24" r="7.5" />
          </svg>
        </Tab>
      </PeriodTabs>

      <MaBar>
        <Chip $w={94}>均线<Caret w={13} h={12} /></Chip>
        <Spacer $w={12} />
        <MaItem $c="#222" $w={169} $ls={-2.8}>MA5:17.15<DownArrow /></MaItem>
        <MaItem $c="#ea9a24" $w={144} $ls={-2.4}>10:17.52<DownArrow /></MaItem>
        <MaItem $c="#bd1d7b" $w={160} $ls={-0.6}>20:18.29<DownArrow /></MaItem>
        <Spacer />
        <Chip $w={110} $hot>
          DK点
          <svg width="12" height="30" viewBox="0 0 12 30"><path d="M11 18V29H1Z" fill="#fff" /></svg>
        </Chip>
        <Spacer $w={39} />
        <Chip $w={118}>前复权</Chip>
      </MaBar>

      <Kline />

      <SubBar>
        <Chip $w={162}>主力意愿<Spacer $w={6} /><Caret w={13} h={12} /></Chip>
        <Collapse>
          <svg width="14" height="24" viewBox="0 0 14 24" fill="none" stroke="#fff" strokeWidth="3.6" strokeLinecap="round">
            <path d="M12 2L3 12L12 22" />
          </svg>
        </Collapse>
      </SubBar>
      <SubPanel>主力意愿指标仅适用于日K线</SubPanel>
      <Axis>
        <ChartSvg width="1056" height="14" viewBox="12 1599 1056 14">
          {ticks.map((i) => {
            const major = i === 27 || i === 57 || i === 87;
            return (
              <rect key={i} x={cx(i) - 1} y="1600" width={major ? 2.6 : 2} height={major ? 12 : 8}
                fill={major ? "#555" : "#999"} opacity={i < 16 ? 0.3 + (i - 13) * 0.2 : 1} />
            );
          })}
        </ChartSvg>
        <Dates>
          <DateLabel $col={1} $align="left" $ls={-0.2}>20240403</DateLabel>
          <DateLabel $col={2} $align="center" $ls={-2.1}>20241011</DateLabel>
          <DateLabel $col={4} $align="center" $ls={0}>20250509</DateLabel>
          <DateLabel $col={5} $align="right" $ls={-1}>20251204</DateLabel>
        </Dates>
      </Axis>

      <AiSection>
        <AiBox>
          <AiLogo>问Ai</AiLogo>
          <Txt $s={37} $c="#939393">杭齿前进在船用离合器领域的技术优势有哪些?</Txt>
          <AiGo>
            <svg width="40" height="34" viewBox="0 0 40 34" fill="none" stroke="#fff" strokeWidth="5" strokeLinecap="round" strokeLinejoin="round">
              <path d="M4 17H36M22 4L36 17L22 30" />
            </svg>
          </AiGo>
        </AiBox>
      </AiSection>

      <Banner>
        <svg width="42" height="36" viewBox="0 0 42 36" fill="#ea5504">
          <path d="M1 10H4V25H1ZM7 10L14 9L41 0V36L33 33Q31 36 25 34L17 31L15 27L7 25Z" />
        </svg>
        <BannerText>科创涨幅居前，怎么选股？让收益率<Hundred>113%</Hundred>的大师帮你选&gt;</BannerText>
        <Divider />
        <svg width="30" height="30" viewBox="0 0 30 30" stroke={ORANGE} strokeWidth="3">
          <path d="M2 2L28 28M28 2L2 28" />
        </svg>
      </Banner>

      <InfoTabs>
        {["股吧", "盘口", "资讯", "公告", "研报", "财务", "资料"].map((t, i) => (
          <Tab key={t} $on={i === 0}>{t}</Tab>
        ))}
      </InfoTabs>

      <Cards>
        <Card>
          <CardArt width="245" height="202" viewBox="0 0 245 202">
            <path d="M45 0H245V202H45V72H0V28H45Z" fill="#fdeceb" opacity="0.4" />
            <path d="M80 22H212V110H240V202H60V90H80Z" fill="#fff7f5" opacity="0.8" />
            <path d="M114 47H188L190 172H108ZM66 89H100L96 172H62ZM206 110H240V172H210Z" fill="#fbe3e1" opacity="0.6" />
            <path d="M133 95L150 87H163V121H170V128H137V121H145V102L133 107Z" fill="#fffafa" />
          </CardArt>
          <CardBody>
            <CardHead>
              <svg width="42" height="42" viewBox="0 0 42 42">
                <defs><linearGradient id="ball" x1="0" y1="0" x2="0" y2="1"><stop stopColor="#d9504b" /><stop offset="1" stopColor="#efa39d" /></linearGradient></defs>
                <circle cx="21" cy="21" r="21" fill="url(#ball)" />
                <path d="M8 18H13V31H8ZM15 11H27V31H15ZM29 21H34V31H29Z" fill="#fff" />
                <path d="M19 18L22 16V27" fill="none" stroke="#d9605b" strokeWidth="2.5" />
              </svg>
              人气榜
              <MoreArrow width="14" height="22" viewBox="0 0 14 22" fill="none" stroke="#aaa" strokeWidth="2.4">
                <path d="M2 1L11 11L2 21" />
              </MoreArrow>
            </CardHead>
            <CardLine>A&thinsp;股市场排名第<Hot>693</Hot>&#8202;名</CardLine>
            <CardLine>
              较昨日
              <RiseArrow width="21" height="30" viewBox="0 0 21 30" fill="#e2461a">
                <path d="M10.5 0L21 15H13V30H8V15H0Z" />
              </RiseArrow>
              <Hot $ls={-3.5}>1713</Hot>&thinsp;&#8202;名
            </CardLine>
          </CardBody>
        </Card>
        <Card>
          <CardArt width="230" height="202" viewBox="0 0 230 202">
            <path d="M0 0H230V202H16Z" fill="#fdeceb" opacity="0.5" />
            <g fontFamily="Roboto" fontWeight="900" fontStyle="italic" fontSize="150">
              <text x="40" y="136" textLength="180" lengthAdjust="spacingAndGlyphs" fill="#fbe5e3" stroke="#fff5f3" strokeWidth="8">VS</text>
            </g>
          </CardArt>
          <CardBody>
            <CardHead>
              <svg width="42" height="42" viewBox="0 0 42 42">
                <circle cx="21" cy="21" r="21" fill="url(#ball)" />
                <text x="20" y="29.5" textAnchor="middle" fontFamily="Roboto" fontWeight="900" fontStyle="italic" fontSize="25" fill="#fff" textLength="27" lengthAdjust="spacingAndGlyphs">VS</text>
              </svg>
              多空看盘
            </CardHead>
            <Duel>
              <Side $bull>
                <Disc><svg width="24" height="18" viewBox="-12 -1 24 18" fill="#dd4518"><path d="M0 0L9 15H-9Z" stroke="#dd4518" strokeLinejoin="round" /></svg></Disc>
                <SideText>看涨<Txt $s={27}>**%</Txt></SideText>
              </Side>
              <Side>
                <SideText>看跌<Txt $s={27}>**%</Txt></SideText>
                <Disc><svg width="24" height="18" viewBox="-12 -1 24 18" fill="#3fae62"><path d="M0 15L9 0H-9Z" stroke="#3fae62" strokeLinejoin="round" /></svg></Disc>
              </Side>
            </Duel>
          </CardBody>
        </Card>
      </Cards>

      <Bottom>
        <BottomRow>
          <IndexCell>
            <Caret w={19} h={7} up />
            <Txt $s={36} $ls={-1.2}>3879.52</Txt>
            <IndexRow><Txt $s={30.5} $c={GREY}>上证</Txt><Txt $s={34} $ls={-0.2}>0.04%</Txt></IndexRow>
          </IndexCell>
          <Action>
            <svg width="60" height="56" viewBox="0 0 60 56" fill="none" stroke={GREY} strokeWidth="2.8">
              <path d="M17 9A24 24 0 0 1 52 38M44 47A24 24 0 0 1 8 18M57 34L51 40L50 32M2 22L9 16L10 24" />
              <path d="M21 15L30 26L39 15M30 26V43M20 27H40M20 34H40" />
            </svg>
            交易
          </Action>
          <Action>
            <svg width="52" height="56" viewBox="0 0 52 56" fill="none" stroke={GREY} strokeWidth="2.8">
              <path d="M35 5H8Q3 5 3 10V46Q3 51 8 51H44Q49 51 49 46V18" />
              <path d="M20 34L22 28L40 11L44 15L26 31ZM43 8L46 5L49 8L46 12Z" fill={GREY} strokeWidth="1.5" />
            </svg>
            发帖
          </Action>
          <Action>
            <svg width="50" height="56" viewBox="0 0 50 56" fill="none" stroke={GREY} strokeWidth="2.7">
              <rect x="3" y="7" width="20" height="20" rx="3" />
              <rect x="3" y="31" width="20" height="20" rx="3" />
              <rect x="27" y="31" width="20" height="20" rx="3" />
              <path d="M37 6L47.5 17L37 28L26.5 17Z" strokeLinejoin="round" />
            </svg>
            功能
          </Action>
          <Action>
            <svg width="52" height="56" viewBox="0 0 52 56" fill="none" stroke={GREY} strokeWidth="2.6">
              <circle cx="26" cy="28" r="23.5" />
              <g fill={GREY} stroke="none"><circle cx="15.5" cy="28" r="2.6" /><circle cx="26" cy="28" r="2.6" /><circle cx="36.5" cy="28" r="2.6" /></g>
            </svg>
            设自选
          </Action>
        </BottomRow>
        <HomeBar />
      </Bottom>
    </Page>
  );
}
